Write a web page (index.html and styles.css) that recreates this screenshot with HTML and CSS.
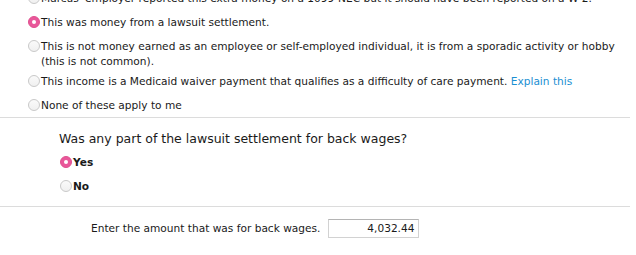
FILE: index.html
```html
<!DOCTYPE html>
<html>
<head>
<meta charset="utf-8">
<link rel="stylesheet" href="styles.css">
</head>
<body>
<div class="page">
  <section class="options">
    <div class="option"><span class="radio"></span><span class="label">Marcus' employer reported this extra money on a 1099-NEC but it should have been reported on a W-2.</span></div>
    <div class="option"><span class="radio checked"></span><span class="label">This was money from a lawsuit settlement.</span></div>
    <div class="option wrap"><span class="radio"></span><span class="label">This is not money earned as an employee or self-employed individual, it is from a sporadic activity or hobby<br>(this is not common).</span></div>
    <div class="option"><span class="radio"></span><span class="label">This income is a Medicaid waiver payment that qualifies as a difficulty of care payment. <a class="link" href="#">Explain this</a></span></div>
    <div class="option last"><span class="radio"></span><span class="label">None of these apply to me</span></div>
  </section>
  <section class="question">
    <h2 class="q-title">Was any part of the lawsuit settlement for back wages?</h2>
    <div class="option bold"><span class="radio checked"></span><span class="label">Yes</span></div>
    <div class="option bold last"><span class="radio"></span><span class="label">No</span></div>
  </section>
  <section class="amount">
    <span class="amount-label">Enter the amount that was for back wages.</span>
    <span class="amount-input">4,032.44</span>
  </section>
</div>
</body>
</html>
```
FILE: styles.css
```css
html, body {
  margin: 0;
  padding: 0;
  background: #fff;
}
body {
  font-family: "DejaVu Sans", sans-serif;
  font-size: 10.6px;
  color: #1a1a1a;
}
.page {
  width: 630px;
  overflow: hidden;
}
.options {
  margin-top: -9px;
  padding-left: 28px;
  padding-bottom: 4px;
  border-bottom: 1px solid #dcdcdc;
}
.option {
  display: flex;
  align-items: flex-start;
  line-height: 15px;
  margin-bottom: 9px;
  white-space: nowrap;
}
.option.wrap {
  margin-bottom: 5px;
}
.option.last {
  margin-bottom: 0;
}
.radio {
  flex-shrink: 0;
  box-sizing: border-box;
  width: 12px;
  height: 12px;
  margin-top: 1px;
  margin-right: 1px;
  border-radius: 50%;
  border: 1px solid #c9c9c9;
  background: linear-gradient(#fafafa, #f0f0f0);
  position: relative;
}
.radio.checked {
  border-color: #e0508f;
  background: #e9579a;
}
.radio.checked::after {
  content: "";
  position: absolute;
  left: 3px;
  top: 3px;
  width: 4px;
  height: 4px;
  border-radius: 50%;
  background: #fff;
}
.link {
  color: #1b8fd2;
  text-decoration: none;
}
.question {
  padding: 12px 0 12px 59px;
  border-bottom: 1px solid #dcdcdc;
}
.q-title {
  margin: 0 0 7px;
  font-size: 12.5px;
  font-weight: normal;
  line-height: 18px;
  color: #1a1a1a;
}
.option.bold {
  font-weight: bold;
  margin-left: 1px;
}
.question .option {
  margin-bottom: 9px;
}
.question .option.last {
  margin-bottom: 0;
}
.amount {
  display: flex;
  align-items: center;
  gap: 8px;
  padding: 12px 0 0 91px;
}
.amount-label {
  line-height: 15px;
}
.amount-input {
  box-sizing: border-box;
  width: 91px;
  height: 19px;
  border: 1px solid #d2d2d2;
  border-top-color: #b4b4b4;
  text-align: right;
  padding-right: 4px;
  line-height: 17px;
}
```
